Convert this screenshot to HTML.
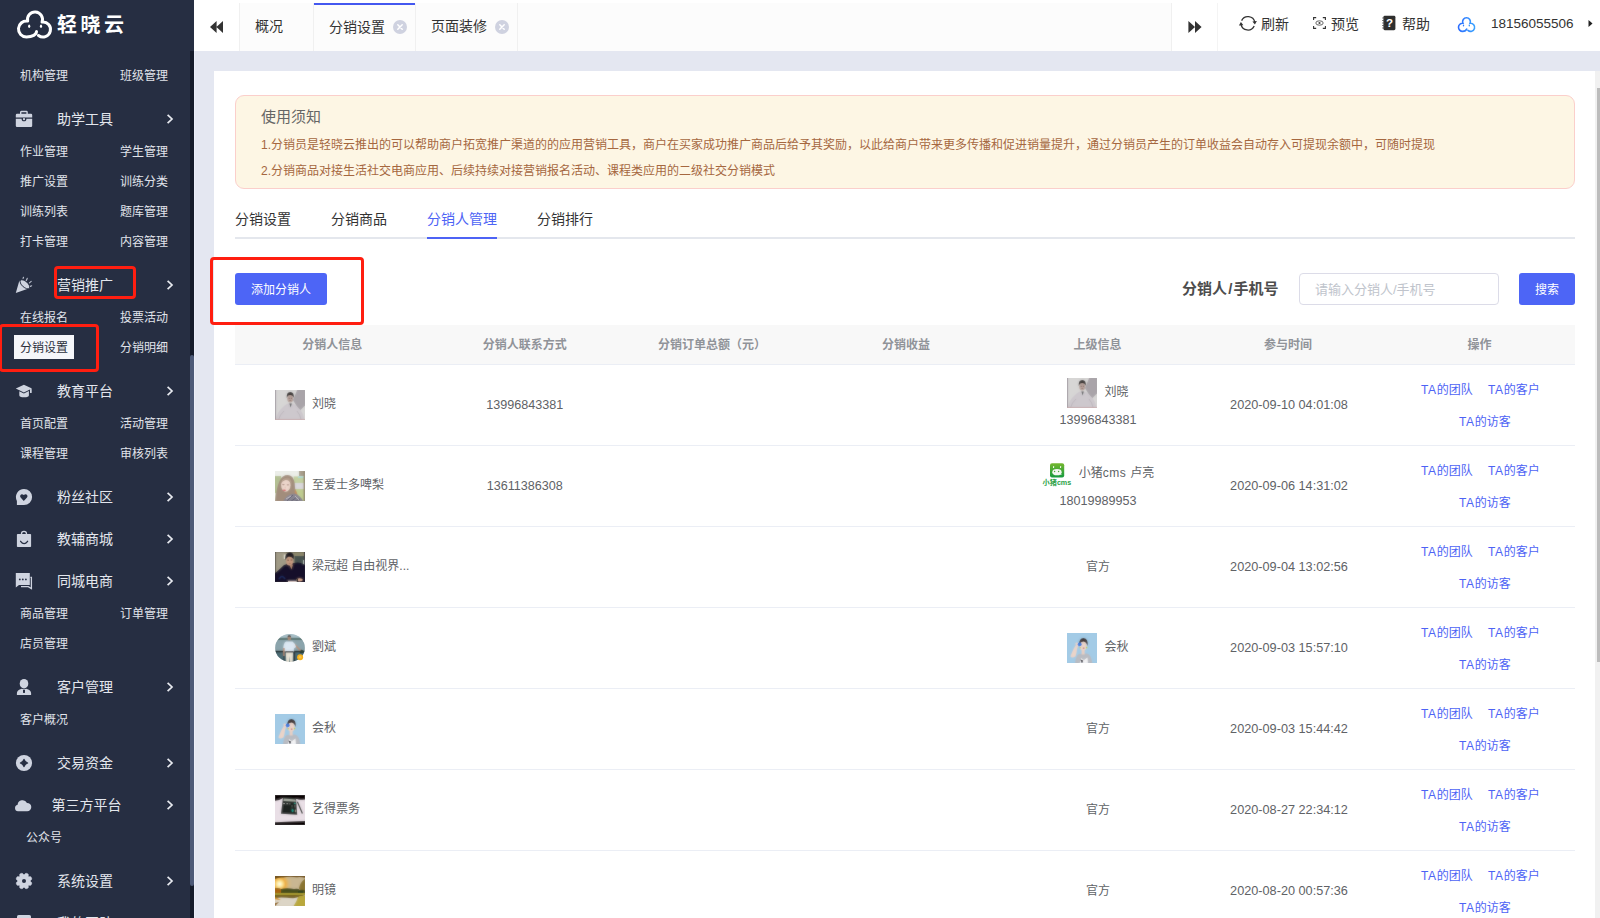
<!DOCTYPE html>
<html lang="zh-CN">
<head>
<meta charset="utf-8">
<title>分销设置 - 轻晓云</title>
<style>
*{box-sizing:border-box;margin:0;padding:0}
html,body{width:1600px;height:918px;overflow:hidden}
body{font-family:"Liberation Sans","Noto Sans CJK SC",sans-serif;background:#e4e7f1;position:relative;color:#555;font-size:12px}
.abs{position:absolute}
/* sidebar */
#side{position:absolute;left:0;top:0;width:194px;height:918px;background:#262e42;overflow:hidden}
#side .track{position:absolute;left:190px;top:51px;width:4px;height:867px;background:#161c2b}
#side .thumb{position:absolute;left:190px;top:355px;width:4px;height:531px;background:#4d5a78;border-radius:2px}
#side .sub{position:absolute;width:100px;text-align:center;font-size:12px;line-height:20px;height:20px;color:#e1e4eb;white-space:nowrap}
#side .sub.l{left:-6px}
#side .sub.r{left:94px}
#side .hd{position:absolute;left:0;width:170px;text-align:center;font-size:14px;line-height:22px;height:22px;color:#e3e6ed;white-space:nowrap}
#side .ar{position:absolute;left:166px;width:8px;height:10px}
#side .ic{position:absolute;left:15px;width:18px;height:18px}
/* topbar */
#top{position:absolute;left:194px;top:0;width:1406px;height:51px;background:#fff}
#top .strip{position:absolute;left:45px;top:3px;width:933px;height:48px;background:#fcfcfc;border-left:1px solid #f0f0f0;border-right:1px solid #f0f0f0}
#top .tab{position:absolute;top:3px;height:48px;line-height:46px;font-size:14px;color:#333;border-right:1px solid #f0f0f0;white-space:nowrap}
#top .tab.on{border-top:2px solid transparent;line-height:44px;background:#fcfcfc}
#top .tab.on:before{content:"";position:absolute;left:0;top:-2px;width:101px;height:2px;background:#4458f0}
#top .x{position:absolute;width:13px;height:13px;border-radius:50%;background:#d5d5de}
#top .t{position:absolute;top:14px;font-size:14px;line-height:20px;color:#333;white-space:nowrap}
/* card */
#card{position:absolute;left:214px;top:71px;width:1381px;height:847px;background:#fff}
#vs{position:absolute;left:1595px;top:71px;width:5px;height:847px;background:#f1f1f1}
#vs i{position:absolute;left:2px;top:17px;width:3px;height:574px;background:#bcbcbc}
#note{position:absolute;left:235px;top:95px;width:1340px;height:94px;background:#fdf6e4;border:1px solid #fbcfcb;border-radius:9px}
#note h4{position:absolute;left:25px;top:10px;font-size:15px;font-weight:normal;color:#666;line-height:22px}
#note p{position:absolute;left:25px;font-size:12px;color:#a5673f;line-height:18px;white-space:nowrap}
.ntab{position:absolute;top:208px;font-size:14px;line-height:22px;color:#333;white-space:nowrap}
.ntab.on{color:#4d63f5}
#nline{position:absolute;left:235px;top:237px;width:1340px;height:2px;background:#e4e7ed}
#nact{position:absolute;left:427px;top:237px;width:70px;height:2px;background:#4d63f5}
.btn{position:absolute;top:273px;height:32px;line-height:34px;background:#4d65f6;color:#fff;font-size:12px;text-align:center;border-radius:3px}
#slabel{position:absolute;left:1182px;top:278px;font-size:15px;font-weight:bold;color:#4d4d4d;line-height:22px;white-space:nowrap}
#sinput{position:absolute;left:1299px;top:273px;width:200px;height:32px;border:1px solid #dcdce8;border-radius:4px;font-size:13px;line-height:31px;color:#c0c4cc;padding-left:15px;white-space:nowrap}
.red{position:absolute;border:3px solid #ff1e10;border-radius:4px}
/* table */
#th{position:absolute;left:235px;top:325px;width:1340px;height:40px;background:#f8f8f8;border-bottom:1px solid #ebeef5}
#th span{position:absolute;top:0;width:200px;text-align:center;line-height:40px;font-size:12px;font-weight:bold;color:#909399;white-space:nowrap}
.row{position:absolute;left:235px;width:1340px;height:81px;border-bottom:1px solid #ebeef5}
.row .av{position:absolute;left:40px;top:25px;width:30px;height:30px;overflow:hidden}
.row .nm{position:absolute;left:77px;top:30px;line-height:18px;font-size:12px;color:#606266;white-space:nowrap}
.row .ph{position:absolute;left:189.7px;width:200px;top:31px;line-height:18px;text-align:center;font-size:12.6px;color:#606266}
.row .tm{position:absolute;left:954px;width:200px;top:31px;line-height:18px;text-align:center;font-size:12.7px;color:#606266;white-space:nowrap}
.row .up{position:absolute;left:763px;width:200px;top:0;height:80px;text-align:center;font-size:12px;color:#606266}
.row .ul{position:absolute;left:0;width:100%;height:30px;display:flex;justify-content:center;align-items:center}
.row .uav{display:block;width:30px;height:30px;margin-right:7px}
.row .unm{line-height:18px;font-size:12px;white-space:nowrap;position:relative;top:-1px}
.row a{position:absolute;font-size:12px;line-height:18px;color:#4d63f5;white-space:nowrap;text-decoration:none}
.row a span{letter-spacing:0.6px}
.row a.a1{left:1186px;top:16px}
.row a.a2{left:1253px;top:16px}
.row a.a3{left:1224px;top:48px}
</style>
</head>
<body>
<div id="side">
<svg class="abs" style="left:0;top:0.7px" width="60" height="50" viewBox="0 0 60 50"><path d="M36.5 30.5 C36.5 33.5 32.5 36 26.5 36 A8 8 0 1 1 27.67 20.09 A7.5 7.5 0 1 1 42.05 21.06 A7.5 7.5 0 1 1 38.49 34.49" fill="none" stroke="#fff" stroke-width="3" stroke-linecap="round" stroke-linejoin="round"/><ellipse cx="29.2" cy="25.2" rx="1.1" ry="1.8" fill="#fff"/><ellipse cx="41" cy="25.2" rx="1.1" ry="1.8" fill="#fff"/></svg>
<div class="abs" style="left:57.1px;top:9.8px;font-size:20px;line-height:30px;font-weight:bold;color:#fff;letter-spacing:3.4px;white-space:nowrap">轻晓云</div>

<div class="sub l" style="top:66px">机构管理</div><div class="sub r" style="top:66px">班级管理</div>
<div class="ic" style="top:110px"><svg width="18" height="18" viewBox="0 0 18 18" style="display:block;overflow:visible"><path d="M5.7 4 V2.2 Q5.7 1.5 6.4 1.5 H11.4 Q12.1 1.5 12.1 2.2 V4" fill="none" stroke="#cfd4e0" stroke-width="1.4"/><path d="M0.8 4.9 Q0.8 3.7 2 3.7 H16 Q17.2 3.7 17.2 4.9 V7.6 H0.8 Z" fill="#cfd4e0"/><path d="M0.8 8.7 H6.6 A2.4 2.6 0 0 0 11.4 8.7 H17.2 V15.8 Q17.2 17 16 17 H2 Q0.8 17 0.8 15.8 Z" fill="#cfd4e0"/><circle cx="9" cy="9.2" r="1.1" fill="#cfd4e0"/></svg></div><div class="hd" style="top:108px;">助学工具</div><svg class="ar" style="top:114px" viewBox="0 0 8 10"><path d="M1.6 0.8 L6 5 L1.6 9.2" fill="none" stroke="#e8eaf0" stroke-width="1.7"/></svg>
<div class="sub l" style="top:142px">作业管理</div><div class="sub r" style="top:142px">学生管理</div>
<div class="sub l" style="top:172px">推广设置</div><div class="sub r" style="top:172px">训练分类</div>
<div class="sub l" style="top:202px">训练列表</div><div class="sub r" style="top:202px">题库管理</div>
<div class="sub l" style="top:232px">打卡管理</div><div class="sub r" style="top:232px">内容管理</div>
<div class="ic" style="top:276px"><svg width="18" height="18" viewBox="0 0 18 18" style="display:block;overflow:visible"><path d="M0.8 17.1 L4.4 4.6 Q5.2 8.4 7.8 10.6 Q10.4 12.8 13.6 12.6 Z" fill="#cfd4e0"/><ellipse cx="9.9" cy="8.3" rx="5.9" ry="2.9" transform="rotate(42 9.9 8.3)" fill="#cfd4e0" stroke="#262e42" stroke-width="0.8"/><path d="M8.1 2.4 L8.5 1.3 M11.3 4.4 L12.2 2.4 M14.4 6.9 L16.2 5.4 M15.4 10.4 L16.6 9.8" stroke="#cfd4e0" stroke-width="1.2" stroke-linecap="round" fill="none" opacity="0.85"/></svg></div><div class="hd" style="top:274px;">营销推广</div><svg class="ar" style="top:280px" viewBox="0 0 8 10"><path d="M1.6 0.8 L6 5 L1.6 9.2" fill="none" stroke="#e8eaf0" stroke-width="1.7"/></svg>
<div class="sub l" style="top:308px">在线报名</div><div class="sub r" style="top:308px">投票活动</div>
<div style="position:absolute;left:14px;top:335px;width:60px;height:24px;background:#f5f6fa"></div>
<div class="sub l" style="top:338px"><span style="color:#2b2f3a">分销设置</span></div><div class="sub r" style="top:338px">分销明细</div>
<div class="ic" style="top:382px"><svg width="18" height="18" viewBox="0 0 18 18" style="display:block;overflow:visible"><path d="M0.8 6.6 L8.9 2.8 L17 6.6 L8.9 10.4 Z" fill="#cfd4e0"/><path d="M4.3 9.2 L8.9 11.4 L13.9 9.1 V13.2 Q13.9 15.2 9.1 15.2 Q4.3 15.2 4.3 13.2 Z" fill="#cfd4e0"/><rect x="15" y="7" width="1.7" height="4" rx="0.5" fill="#cfd4e0"/></svg></div><div class="hd" style="top:380px;">教育平台</div><svg class="ar" style="top:386px" viewBox="0 0 8 10"><path d="M1.6 0.8 L6 5 L1.6 9.2" fill="none" stroke="#e8eaf0" stroke-width="1.7"/></svg>
<div class="sub l" style="top:414px">首页配置</div><div class="sub r" style="top:414px">活动管理</div>
<div class="sub l" style="top:444px">课程管理</div><div class="sub r" style="top:444px">审核列表</div>
<div class="ic" style="top:488px"><svg width="18" height="18" viewBox="0 0 18 18" style="display:block;overflow:visible"><path d="M9 0.9 A8.1 8.1 0 1 1 9 17.1 H1.9 V12.9 A8.1 8.1 0 0 1 9 0.9 Z" fill="#cfd4e0"/><path d="M8.8 12.9 L5.6 9.5 Q4.6 8.2 5.5 7 Q6.8 5.7 8.8 7.1 Q10.8 5.7 12.1 7 Q13 8.2 12 9.5 Z" fill="#262e42"/></svg></div><div class="hd" style="top:486px;">粉丝社区</div><svg class="ar" style="top:492px" viewBox="0 0 8 10"><path d="M1.6 0.8 L6 5 L1.6 9.2" fill="none" stroke="#e8eaf0" stroke-width="1.7"/></svg>
<div class="ic" style="top:530px"><svg width="18" height="18" viewBox="0 0 18 18" style="display:block;overflow:visible"><path d="M6.5 4.6 V3.8 A2.5 2.5 0 0 1 11.5 3.8 V4.6" fill="none" stroke="#cfd4e0" stroke-width="1.3"/><rect x="1.9" y="3.9" width="14.2" height="13.1" rx="0.8" fill="#cfd4e0"/><path d="M5.6 11.3 Q9 16 12.6 11.3" fill="none" stroke="#262e42" stroke-width="1.3" stroke-linecap="round"/></svg></div><div class="hd" style="top:528px;">教辅商城</div><svg class="ar" style="top:534px" viewBox="0 0 8 10"><path d="M1.6 0.8 L6 5 L1.6 9.2" fill="none" stroke="#e8eaf0" stroke-width="1.7"/></svg>
<div class="ic" style="top:572px"><svg width="18" height="18" viewBox="0 0 18 18" style="display:block;overflow:visible"><path d="M0.8 0.9 H14.8 V13.1 H4 L0.8 15.4 Z" fill="#cfd4e0"/><circle cx="4.8" cy="7.4" r="0.9" fill="#262e42"/><circle cx="7.8" cy="7.4" r="0.9" fill="#262e42"/><circle cx="10.9" cy="7.4" r="0.9" fill="#262e42"/><path d="M15.4 5.4 H16.4 V16.6 L13.3 14.7 H6" fill="none" stroke="#cfd4e0" stroke-width="1.3"/></svg></div><div class="hd" style="top:570px;">同城电商</div><svg class="ar" style="top:576px" viewBox="0 0 8 10"><path d="M1.6 0.8 L6 5 L1.6 9.2" fill="none" stroke="#e8eaf0" stroke-width="1.7"/></svg>
<div class="sub l" style="top:604px">商品管理</div><div class="sub r" style="top:604px">订单管理</div>
<div class="sub l" style="top:634px">店员管理</div>
<div class="ic" style="top:678px"><svg width="18" height="18" viewBox="0 0 18 18" style="display:block;overflow:visible"><ellipse cx="9" cy="5.7" rx="4.3" ry="4.8" fill="#cfd4e0"/><path d="M1.9 17 V15 Q1.9 12.3 6.8 10.8 L9 11.6 L11.2 10.8 Q16.1 12.3 16.1 15 V17 Z" fill="#cfd4e0"/><rect x="8" y="12" width="2" height="2.9" fill="#262e42"/></svg></div><div class="hd" style="top:676px;">客户管理</div><svg class="ar" style="top:682px" viewBox="0 0 8 10"><path d="M1.6 0.8 L6 5 L1.6 9.2" fill="none" stroke="#e8eaf0" stroke-width="1.7"/></svg>
<div class="sub l" style="top:710px">客户概况</div>
<div class="ic" style="top:754px"><svg width="18" height="18" viewBox="0 0 18 18" style="display:block;overflow:visible"><circle cx="9" cy="9" r="8.1" fill="#cfd4e0"/><path d="M9 5.4 Q9.9 8.1 12.6 9 Q9.9 9.9 9 12.6 Q8.1 9.9 5.4 9 Q8.1 8.1 9 5.4 Z" fill="#262e42" stroke="#262e42" stroke-width="1.2" stroke-linejoin="round"/></svg></div><div class="hd" style="top:752px;">交易资金</div><svg class="ar" style="top:758px" viewBox="0 0 8 10"><path d="M1.6 0.8 L6 5 L1.6 9.2" fill="none" stroke="#e8eaf0" stroke-width="1.7"/></svg>
<div class="ic" style="top:796px"><svg width="18" height="18" viewBox="0 0 18 18" style="display:block;overflow:visible"><path d="M3 15.3 A3.3 3.3 0 0 1 2.6 8.8 A5 5 0 0 1 12 6.9 A4.2 4.2 0 0 1 12.2 15.3 Z" fill="#cfd4e0"/></svg></div><div class="hd" style="top:794px;left:1.5px">第三方平台</div><svg class="ar" style="top:800px" viewBox="0 0 8 10"><path d="M1.6 0.8 L6 5 L1.6 9.2" fill="none" stroke="#e8eaf0" stroke-width="1.7"/></svg>
<div class="sub l" style="top:828px">公众号</div>
<div class="ic" style="top:872px"><svg width="18" height="18" viewBox="0 0 18 18" style="display:block;overflow:visible"><path d="M15.49 9.40 L16.86 10.96 L15.94 13.17 L13.87 13.31 L13.31 13.87 L13.17 15.94 L10.96 16.86 L9.40 15.49 L8.60 15.49 L7.04 16.86 L4.83 15.94 L4.69 13.87 L4.13 13.31 L2.06 13.17 L1.14 10.96 L2.51 9.40 L2.51 8.60 L1.14 7.04 L2.06 4.83 L4.13 4.69 L4.69 4.13 L4.83 2.06 L7.04 1.14 L8.60 2.51 L9.40 2.51 L10.96 1.14 L13.17 2.06 L13.31 4.13 L13.87 4.69 L15.94 4.83 L16.86 7.04 L15.49 8.60 Z" fill="#cfd4e0" stroke="#cfd4e0" stroke-width="0.6" stroke-linejoin="round"/><circle cx="9" cy="9" r="2" fill="#262e42"/></svg></div><div class="hd" style="top:870px;">系统设置</div><svg class="ar" style="top:876px" viewBox="0 0 8 10"><path d="M1.6 0.8 L6 5 L1.6 9.2" fill="none" stroke="#e8eaf0" stroke-width="1.7"/></svg>
<div class="ic" style="top:914px"><svg width="18" height="18" viewBox="0 0 18 18" style="display:block;overflow:visible"><rect x="2" y="1" width="14" height="12" rx="1.6" fill="#cfd4e0"/></svg></div><div class="hd" style="top:912px;">我的团队</div><svg class="ar" style="top:918px" viewBox="0 0 8 10"><path d="M1.6 0.8 L6 5 L1.6 9.2" fill="none" stroke="#e8eaf0" stroke-width="1.7"/></svg>
<div class="track"></div><div class="thumb"></div>
</div>
<div id="top">
<div class="strip"></div>
<svg class="abs" style="left:16px;top:21px" width="14" height="12" viewBox="0 0 14 12"><path d="M6.6 0 V12 L0 6 Z M13 0 V12 L6.4 6 Z" fill="#333"/></svg>
<div class="tab" style="left:45px;width:75px;padding-left:15px;border-left:1px solid #f0f0f0">概况</div>
<div class="tab on" style="left:120px;width:102px;padding-left:15px">分销设置</div>
<svg class="abs" style="left:199px;top:20px" width="14" height="14" viewBox="0 0 14 14"><circle cx="7" cy="7" r="7" fill="#cfd2e0"/><path d="M4.8 4.8 L9.2 9.2 M9.2 4.8 L4.8 9.2" stroke="#fff" stroke-width="1.5" stroke-linecap="round"/></svg>
<div class="tab" style="left:222px;width:102px;padding-left:15px">页面装修</div>
<svg class="abs" style="left:301px;top:20px" width="14" height="14" viewBox="0 0 14 14"><circle cx="7" cy="7" r="7" fill="#cfd2e0"/><path d="M4.8 4.8 L9.2 9.2 M9.2 4.8 L4.8 9.2" stroke="#fff" stroke-width="1.5" stroke-linecap="round"/></svg>
<div class="abs" style="left:1023px;top:3px;width:1px;height:48px;background:#f4f4f4"></div>
<svg class="abs" style="left:994px;top:21px" width="14" height="12" viewBox="0 0 14 12"><path d="M0.4 0 V12 L7 6 Z M7 0 V12 L13.6 6 Z" fill="#333"/></svg>
<!-- refresh -->
<svg class="abs" style="left:1044px;top:14px" width="20" height="18" viewBox="0 0 20 18"><path d="M3.6 6.6 A7 7 0 0 1 16.8 8.2 M16.2 12 A7 7 0 0 1 3 10.4" fill="none" stroke="#333" stroke-width="1.3"/><path d="M14.4 7.4 L16.9 10.6 L18.9 7 Z" fill="#333"/><path d="M5.4 11.2 L2.9 8 L0.9 11.6 Z" fill="#333"/></svg>
<div class="t" style="left:1067px">刷新</div>
<!-- preview -->
<svg class="abs" style="left:1119px;top:17px" width="13" height="12" viewBox="0 0 13 12"><path d="M0.6 3 V0.6 H3.2 M9.8 0.6 H12.4 V3 M12.4 9 V11.4 H9.8 M3.2 11.4 H0.6 V9" fill="none" stroke="#333" stroke-width="1.1"/><ellipse cx="6.5" cy="6" rx="3.7" ry="2.2" fill="none" stroke="#555" stroke-width="0.9"/><circle cx="6.5" cy="6" r="1.1" fill="#444"/></svg>
<div class="t" style="left:1137px">预览</div>
<!-- help -->
<svg class="abs" style="left:1188px;top:15px" width="14" height="16" viewBox="0 0 14 16"><rect x="1.4" y="0.8" width="12" height="14.4" rx="1.4" fill="#2e2e2e"/><path d="M0.2 3 H2.4 M0.2 5.5 H2.4 M0.2 8 H2.4 M0.2 10.5 H2.4 M0.2 13 H2.4" stroke="#555" stroke-width="0.9"/><text x="7.6" y="12.2" font-family="Liberation Sans,sans-serif" font-size="11.5" font-weight="bold" fill="#fff" text-anchor="middle">?</text></svg>
<div class="t" style="left:1208px">帮助</div>
<!-- cloud -->
<svg class="abs" style="left:1262px;top:15px" width="22" height="20" viewBox="0 0 22 20"><defs><linearGradient id="cg" x1="0" y1="0" x2="1" y2="0"><stop offset="0" stop-color="#2b6dff"/><stop offset="1" stop-color="#3aa2ff"/></linearGradient></defs><path d="M10.7 14.1 C10.2 15.6 8.6 16.4 6.6 16.4 A4.1 4.1 0 1 1 6.904 8.211 A3.9 3.9 0 1 1 14.089 8.226 A4.1 4.1 0 1 1 11.915 15.44" fill="none" stroke="url(#cg)" stroke-width="1.6" stroke-linecap="round"/><ellipse cx="7.5" cy="10.4" rx="0.7" ry="1" fill="#2f7cff"/><ellipse cx="13.3" cy="10.4" rx="0.7" ry="1" fill="#3793ff"/></svg>
<div class="t" style="left:1297px;font-size:13.5px">18156055506</div>
<svg class="abs" style="left:1394px;top:20px" width="5" height="7" viewBox="0 0 5 7"><path d="M0.5 0 L4.5 3.5 L0.5 7 Z" fill="#222"/></svg>

</div>
<div class="abs" style="left:194px;top:51px;width:1px;height:867px;background:#ebeef8"></div>
<div id="card"></div>
<div id="vs"><i></i></div>
<div id="note">
<h4>使用须知</h4>
<p style="top:40px">1.分销员是轻晓云推出的可以帮助商户拓宽推广渠道的的应用营销工具，商户在买家成功推广商品后给予其奖励，以此给商户带来更多传播和促进销量提升，通过分销员产生的订单收益会自动存入可提现余额中，可随时提现</p>
<p style="top:66px">2.分销商品对接生活社交电商应用、后续持续对接营销报名活动、课程类应用的二级社交分销模式</p>
</div>
<div class="ntab" style="left:235px">分销设置</div>
<div class="ntab" style="left:331px">分销商品</div>
<div class="ntab on" style="left:427px">分销人管理</div>
<div class="ntab" style="left:537px">分销排行</div>
<div id="nline"></div><div id="nact"></div>
<div class="btn" style="left:235px;width:92px">添加分销人</div>
<div id="slabel">分销人<span style="padding:0 1.2px">/</span>手机号</div>
<div id="sinput">请输入分销人/手机号</div>
<div class="btn" style="left:1519px;width:56px">搜索</div>
<div id="th">
<span style="left:-2.8px">分销人信息</span><span style="left:189.7px">分销人联系方式</span><span style="left:377.1px">分销订单总额（元）</span><span style="left:571.0px">分销收益</span><span style="left:762.5px">上级信息</span><span style="left:953.0px">参与时间</span><span style="left:1144.4px">操作</span>
</div>
<div class="row" style="top:365px"><div class="av"><svg width="30" height="30" viewBox="0 0 30 30" style="display:block"><defs><filter id="bl1" x="-10%" y="-10%" width="120%" height="120%"><feGaussianBlur stdDeviation="0.8"/></filter><clipPath id="cp1"><rect width="30" height="30"/></clipPath></defs><g clip-path="url(#cp1)"><g filter="url(#bl1)"><rect x="-2" y="-2" width="34" height="34" fill="#d7d6d5"/><path d="M22.6 -1 H31 V14.5 L24.5 21 L18 10 Z" fill="#a9a4a9"/><rect x="-2" y="-2" width="3" height="34" fill="#a59fa6"/><path d="M0.5 31 Q2 22 7 18 Q11 13.5 15 13 Q20 13.5 23.5 18 Q28.5 22 29.5 31 Z" fill="#cdc8cd"/><path d="M3 31 Q5 24 9 21" stroke="#bdb7be" stroke-width="1" fill="none"/><path d="M26.5 31 Q25 24 22 21" stroke="#bdb7be" stroke-width="1" fill="none"/><ellipse cx="15.2" cy="8.6" rx="3" ry="4" fill="#b7a29b"/><path d="M11.8 8 Q11.2 2.2 15.3 2 Q19.4 2.2 18.7 8 Q17.8 4.8 15.2 4.9 Q12.6 4.8 11.8 8 Z" fill="#2f2b2a"/><path d="M13.6 8.3 H14.8 M15.8 8.3 H17" stroke="#6a544e" stroke-width="0.7"/><rect x="14.3" y="10.3" width="2" height="0.7" fill="#8a6d66"/><path d="M14.4 13.5 L15.6 17.5 L16.8 13.5 Z" fill="#5d5f60"/><rect x="-2" y="29.3" width="34" height="2" fill="#c9a9aa"/></g><g opacity="0.5"><rect x="-2" y="-2" width="34" height="34" fill="#d7d6d5"/><path d="M22.6 -1 H31 V14.5 L24.5 21 L18 10 Z" fill="#a9a4a9"/><rect x="-2" y="-2" width="3" height="34" fill="#a59fa6"/><path d="M0.5 31 Q2 22 7 18 Q11 13.5 15 13 Q20 13.5 23.5 18 Q28.5 22 29.5 31 Z" fill="#cdc8cd"/><path d="M3 31 Q5 24 9 21" stroke="#bdb7be" stroke-width="1" fill="none"/><path d="M26.5 31 Q25 24 22 21" stroke="#bdb7be" stroke-width="1" fill="none"/><ellipse cx="15.2" cy="8.6" rx="3" ry="4" fill="#b7a29b"/><path d="M11.8 8 Q11.2 2.2 15.3 2 Q19.4 2.2 18.7 8 Q17.8 4.8 15.2 4.9 Q12.6 4.8 11.8 8 Z" fill="#2f2b2a"/><path d="M13.6 8.3 H14.8 M15.8 8.3 H17" stroke="#6a544e" stroke-width="0.7"/><rect x="14.3" y="10.3" width="2" height="0.7" fill="#8a6d66"/><path d="M14.4 13.5 L15.6 17.5 L16.8 13.5 Z" fill="#5d5f60"/><rect x="-2" y="29.3" width="34" height="2" fill="#c9a9aa"/></g></g></svg></div><div class="nm">刘晓</div><div class="ph">13996843381</div><div class="up"><div class="ul" style="top:13px"><span class="uav"><svg width="30" height="30" viewBox="0 0 30 30" style="display:block"><defs><filter id="bl2" x="-10%" y="-10%" width="120%" height="120%"><feGaussianBlur stdDeviation="0.8"/></filter><clipPath id="cp2"><rect width="30" height="30"/></clipPath></defs><g clip-path="url(#cp2)"><g filter="url(#bl2)"><rect x="-2" y="-2" width="34" height="34" fill="#d7d6d5"/><path d="M22.6 -1 H31 V14.5 L24.5 21 L18 10 Z" fill="#a9a4a9"/><rect x="-2" y="-2" width="3" height="34" fill="#a59fa6"/><path d="M0.5 31 Q2 22 7 18 Q11 13.5 15 13 Q20 13.5 23.5 18 Q28.5 22 29.5 31 Z" fill="#cdc8cd"/><path d="M3 31 Q5 24 9 21" stroke="#bdb7be" stroke-width="1" fill="none"/><path d="M26.5 31 Q25 24 22 21" stroke="#bdb7be" stroke-width="1" fill="none"/><ellipse cx="15.2" cy="8.6" rx="3" ry="4" fill="#b7a29b"/><path d="M11.8 8 Q11.2 2.2 15.3 2 Q19.4 2.2 18.7 8 Q17.8 4.8 15.2 4.9 Q12.6 4.8 11.8 8 Z" fill="#2f2b2a"/><path d="M13.6 8.3 H14.8 M15.8 8.3 H17" stroke="#6a544e" stroke-width="0.7"/><rect x="14.3" y="10.3" width="2" height="0.7" fill="#8a6d66"/><path d="M14.4 13.5 L15.6 17.5 L16.8 13.5 Z" fill="#5d5f60"/><rect x="-2" y="29.3" width="34" height="2" fill="#c9a9aa"/></g><g opacity="0.5"><rect x="-2" y="-2" width="34" height="34" fill="#d7d6d5"/><path d="M22.6 -1 H31 V14.5 L24.5 21 L18 10 Z" fill="#a9a4a9"/><rect x="-2" y="-2" width="3" height="34" fill="#a59fa6"/><path d="M0.5 31 Q2 22 7 18 Q11 13.5 15 13 Q20 13.5 23.5 18 Q28.5 22 29.5 31 Z" fill="#cdc8cd"/><path d="M3 31 Q5 24 9 21" stroke="#bdb7be" stroke-width="1" fill="none"/><path d="M26.5 31 Q25 24 22 21" stroke="#bdb7be" stroke-width="1" fill="none"/><ellipse cx="15.2" cy="8.6" rx="3" ry="4" fill="#b7a29b"/><path d="M11.8 8 Q11.2 2.2 15.3 2 Q19.4 2.2 18.7 8 Q17.8 4.8 15.2 4.9 Q12.6 4.8 11.8 8 Z" fill="#2f2b2a"/><path d="M13.6 8.3 H14.8 M15.8 8.3 H17" stroke="#6a544e" stroke-width="0.7"/><rect x="14.3" y="10.3" width="2" height="0.7" fill="#8a6d66"/><path d="M14.4 13.5 L15.6 17.5 L16.8 13.5 Z" fill="#5d5f60"/><rect x="-2" y="29.3" width="34" height="2" fill="#c9a9aa"/></g></g></svg></span><span class="unm">刘晓</span></div><div style="position:absolute;left:0;width:100%;top:46px;line-height:18px;font-size:12.6px">13996843381</div></div><div class="tm">2020-09-10 04:01:08</div><a class="a1"><span>TA</span>的团队</a><a class="a2"><span>TA</span>的客户</a><a class="a3"><span>TA</span>的访客</a></div>
<div class="row" style="top:446px"><div class="av"><svg width="30" height="30" viewBox="0 0 30 30" style="display:block"><defs><filter id="bl3" x="-10%" y="-10%" width="120%" height="120%"><feGaussianBlur stdDeviation="1.0"/></filter><clipPath id="cp3"><rect width="30" height="30"/></clipPath></defs><g clip-path="url(#cp3)"><g filter="url(#bl3)"><rect x="-2" y="-2" width="34" height="34" fill="#d9dccb"/><rect x="-2" y="-2" width="34" height="7.5" fill="#eceee9"/><rect x="-2" y="5" width="8" height="17" fill="#b4c094"/><rect x="19" y="5.5" width="12" height="6.5" fill="#c3d0a0"/><rect x="19" y="12" width="12" height="6" fill="#d9d7da"/><rect x="19" y="18" width="12" height="13" fill="#bfcc91"/><rect x="24" y="-1" width="6" height="6" fill="#a99f8d"/><rect x="23" y="5.5" width="5.5" height="1.3" fill="#a5dce2"/><rect x="28.6" y="-1" width="2" height="33" fill="#91866f"/><path d="M0 31 Q2 10 8 5.5 Q12 3 16 5 Q20 8 20 16 Q21 24 19 31 Z" fill="#a28d7c"/><path d="M20 18 Q24 24 22 28 L19 30 Z" fill="#c48d5e"/><ellipse cx="10.8" cy="14.2" rx="4.7" ry="6.6" fill="#ecd6cb"/><path d="M5.5 13 Q8 6 13 6.5 Q17 7.5 16.5 13 Q14 8.5 10.5 9 Q7.5 9.5 5.5 13Z" fill="#b09a88"/><ellipse cx="8.4" cy="13.6" rx="1.3" ry="0.6" fill="#a98b80"/><ellipse cx="12.9" cy="13.8" rx="1.3" ry="0.6" fill="#a98b80"/><ellipse cx="10.2" cy="16.6" rx="0.7" ry="1" fill="#e2c3b6"/><ellipse cx="9.3" cy="19.3" rx="1.7" ry="0.8" fill="#d7646a"/><path d="M8 31 Q11 23 20 22.5 Q26 25 28.5 31 Z" fill="#8a8691"/><path d="M12 30 L18 24 M15 31 L22 26 M19 31 L25 28" stroke="#5a5a70" stroke-width="1"/><path d="M11 28 L16 25 M20 25 L24 29" stroke="#d5d0d6" stroke-width="0.9"/></g><g opacity="0.5"><rect x="-2" y="-2" width="34" height="34" fill="#d9dccb"/><rect x="-2" y="-2" width="34" height="7.5" fill="#eceee9"/><rect x="-2" y="5" width="8" height="17" fill="#b4c094"/><rect x="19" y="5.5" width="12" height="6.5" fill="#c3d0a0"/><rect x="19" y="12" width="12" height="6" fill="#d9d7da"/><rect x="19" y="18" width="12" height="13" fill="#bfcc91"/><rect x="24" y="-1" width="6" height="6" fill="#a99f8d"/><rect x="23" y="5.5" width="5.5" height="1.3" fill="#a5dce2"/><rect x="28.6" y="-1" width="2" height="33" fill="#91866f"/><path d="M0 31 Q2 10 8 5.5 Q12 3 16 5 Q20 8 20 16 Q21 24 19 31 Z" fill="#a28d7c"/><path d="M20 18 Q24 24 22 28 L19 30 Z" fill="#c48d5e"/><ellipse cx="10.8" cy="14.2" rx="4.7" ry="6.6" fill="#ecd6cb"/><path d="M5.5 13 Q8 6 13 6.5 Q17 7.5 16.5 13 Q14 8.5 10.5 9 Q7.5 9.5 5.5 13Z" fill="#b09a88"/><ellipse cx="8.4" cy="13.6" rx="1.3" ry="0.6" fill="#a98b80"/><ellipse cx="12.9" cy="13.8" rx="1.3" ry="0.6" fill="#a98b80"/><ellipse cx="10.2" cy="16.6" rx="0.7" ry="1" fill="#e2c3b6"/><ellipse cx="9.3" cy="19.3" rx="1.7" ry="0.8" fill="#d7646a"/><path d="M8 31 Q11 23 20 22.5 Q26 25 28.5 31 Z" fill="#8a8691"/><path d="M12 30 L18 24 M15 31 L22 26 M19 31 L25 28" stroke="#5a5a70" stroke-width="1"/><path d="M11 28 L16 25 M20 25 L24 29" stroke="#d5d0d6" stroke-width="0.9"/></g></g></svg></div><div class="nm">至爱士多啤梨</div><div class="ph">13611386308</div><div class="up"><div class="ul" style="top:13px"><span class="uav"><svg width="30" height="30" viewBox="0 0 30 30" style="display:block"><defs><linearGradient id="gg" x1="0" y1="0" x2="0" y2="1"><stop offset="0" stop-color="#74b72e"/><stop offset="1" stop-color="#159a3f"/></linearGradient></defs><rect x="8" y="4.3" width="14.2" height="14.3" rx="2" fill="url(#gg)"/><rect x="11" y="7" width="1.1" height="2.1" rx="0.5" fill="#f4f8ee"/><rect x="18" y="7" width="1.1" height="2.1" rx="0.5" fill="#f4f8ee"/><ellipse cx="15" cy="13.2" rx="4.7" ry="3.1" fill="#f4f6f2"/><path d="M18 15 L20.3 15.8 L18.5 16 Z" fill="#f4f6f2"/><circle cx="12.6" cy="12.5" r="0.7" fill="#4aa83a"/><circle cx="16.6" cy="12.5" r="0.7" fill="#4aa83a"/><text x="0.6" y="26.1" font-family="Liberation Sans,Noto Sans CJK SC,sans-serif" font-size="6.6" font-weight="bold" fill="#2aa146" textLength="28.6" lengthAdjust="spacingAndGlyphs">小猪cms</text></svg></span><span class="unm">小猪<span style="letter-spacing:0.5px">cms </span>卢亮</span></div><div style="position:absolute;left:0;width:100%;top:46px;line-height:18px;font-size:12.6px">18019989953</div></div><div class="tm">2020-09-06 14:31:02</div><a class="a1"><span>TA</span>的团队</a><a class="a2"><span>TA</span>的客户</a><a class="a3"><span>TA</span>的访客</a></div>
<div class="row" style="top:527px"><div class="av"><svg width="30" height="30" viewBox="0 0 30 30" style="display:block"><defs><filter id="bl4" x="-10%" y="-10%" width="120%" height="120%"><feGaussianBlur stdDeviation="0.8"/></filter><clipPath id="cp4"><rect width="30" height="30"/></clipPath></defs><g clip-path="url(#cp4)"><g filter="url(#bl4)"><rect x="-2" y="-2" width="34" height="34" fill="#8f8a76"/><rect x="-2" y="-2" width="13" height="22" fill="#a09a86"/><rect x="-2" y="-2" width="2.5" height="34" fill="#3a3838"/><rect x="19" y="-2" width="13" height="6" fill="#8c876c"/><rect x="19.5" y="4" width="9.5" height="11" fill="#46524f"/><rect x="28" y="8" width="1.6" height="7" fill="#b9c4bb"/><rect x="29.4" y="-2" width="2" height="34" fill="#1b1730"/><rect x="8.8" y="2.5" width="1.6" height="4.5" fill="#e8e6d6"/><path d="M-1 22 Q5 17 9 13 Q14 11 19 11 Q26 9 31 14 V31 H-1 Z" fill="#15112b"/><path d="M4 27 Q7 22 10 27" stroke="#1d2a5c" stroke-width="1.6" fill="none"/><ellipse cx="14.6" cy="9" rx="3.5" ry="4.6" fill="#c59a80"/><path d="M10.4 8 Q9.6 0.8 15 0.6 Q19.8 1 18.6 7 Q16.5 4.3 13.5 4.8 Q11.5 5.4 10.4 8 Z" fill="#17131d"/><path d="M12.3 8.2 H14 M15.6 8 H17.4" stroke="#5a3c30" stroke-width="0.8"/><ellipse cx="14.8" cy="11.3" rx="1.1" ry="0.5" fill="#a8705e"/><path d="M14.5 13 L16.5 17.5 L18 12.5 Z" fill="#b48a72"/><ellipse cx="24.5" cy="27.8" rx="3.2" ry="1.6" fill="#d9a98f"/><rect x="13" y="28.8" width="9" height="2" fill="#e7d6d2"/><rect x="21.6" y="26.6" width="1.4" height="3" fill="#1a1a1a"/><rect x="-2" y="-2" width="34" height="1.8" fill="#2b2832"/></g><g opacity="0.5"><rect x="-2" y="-2" width="34" height="34" fill="#8f8a76"/><rect x="-2" y="-2" width="13" height="22" fill="#a09a86"/><rect x="-2" y="-2" width="2.5" height="34" fill="#3a3838"/><rect x="19" y="-2" width="13" height="6" fill="#8c876c"/><rect x="19.5" y="4" width="9.5" height="11" fill="#46524f"/><rect x="28" y="8" width="1.6" height="7" fill="#b9c4bb"/><rect x="29.4" y="-2" width="2" height="34" fill="#1b1730"/><rect x="8.8" y="2.5" width="1.6" height="4.5" fill="#e8e6d6"/><path d="M-1 22 Q5 17 9 13 Q14 11 19 11 Q26 9 31 14 V31 H-1 Z" fill="#15112b"/><path d="M4 27 Q7 22 10 27" stroke="#1d2a5c" stroke-width="1.6" fill="none"/><ellipse cx="14.6" cy="9" rx="3.5" ry="4.6" fill="#c59a80"/><path d="M10.4 8 Q9.6 0.8 15 0.6 Q19.8 1 18.6 7 Q16.5 4.3 13.5 4.8 Q11.5 5.4 10.4 8 Z" fill="#17131d"/><path d="M12.3 8.2 H14 M15.6 8 H17.4" stroke="#5a3c30" stroke-width="0.8"/><ellipse cx="14.8" cy="11.3" rx="1.1" ry="0.5" fill="#a8705e"/><path d="M14.5 13 L16.5 17.5 L18 12.5 Z" fill="#b48a72"/><ellipse cx="24.5" cy="27.8" rx="3.2" ry="1.6" fill="#d9a98f"/><rect x="13" y="28.8" width="9" height="2" fill="#e7d6d2"/><rect x="21.6" y="26.6" width="1.4" height="3" fill="#1a1a1a"/><rect x="-2" y="-2" width="34" height="1.8" fill="#2b2832"/></g></g></svg></div><div class="nm">梁冠超 自由视界...</div><div class="up"><div style="position:absolute;left:0;width:100%;top:31px;line-height:18px">官方</div></div><div class="tm">2020-09-04 13:02:56</div><a class="a1"><span>TA</span>的团队</a><a class="a2"><span>TA</span>的客户</a><a class="a3"><span>TA</span>的访客</a></div>
<div class="row" style="top:608px"><div class="av"><svg width="30" height="30" viewBox="0 0 30 30" style="display:block"><defs><filter id="bl4"><feGaussianBlur stdDeviation="0.8"/></filter><clipPath id="cc4"><ellipse cx="15" cy="14.9" rx="14.8" ry="14"/></clipPath></defs><g clip-path="url(#cc4)"><g filter="url(#bl4)"><rect x="-2" y="-2" width="34" height="34" fill="#8ba4ac"/><rect x="-2" y="-2" width="34" height="7" fill="#a9c0c8"/><rect x="-2" y="4.8" width="34" height="2.2" fill="#587471"/><rect x="-2" y="18" width="34" height="13" fill="#4d6c74"/><rect x="-2" y="17.8" width="34" height="1.5" fill="#172224"/><rect x="18.6" y="18" width="1.5" height="12" fill="#1d2b30"/><rect x="8.5" y="18" width="1.2" height="12" fill="#2a3b40"/><ellipse cx="26.5" cy="18.5" rx="2.2" ry="1.8" fill="#1f3524"/><path d="M19 11 L25.5 17.5" stroke="#b98f76" stroke-width="1.6"/><path d="M8.3 17 Q8 10 11 8.5 L17.5 8.5 Q20.5 10.5 21 14 L19 15.5 L18.8 18.6 H9.8 Z" fill="#dce7f2"/><path d="M8.9 15 V23" stroke="#b58c74" stroke-width="1.5"/><rect x="10.6" y="18.4" width="7.4" height="1.2" fill="#2e2a28"/><path d="M10.8 19.6 H18 L17.6 31 H15 L14.4 23 L13.8 31 H11.4 Z" fill="#e7e2d4"/><ellipse cx="14.3" cy="5" rx="1.8" ry="2.5" fill="#a98671"/><path d="M12.5 4.2 Q12.6 2 14.3 2 Q16 2 16.1 4.2 Q14.3 3.2 12.5 4.2Z" fill="#4b4644"/></g><g opacity="0.5"><rect x="-2" y="-2" width="34" height="34" fill="#8ba4ac"/><rect x="-2" y="-2" width="34" height="7" fill="#a9c0c8"/><rect x="-2" y="4.8" width="34" height="2.2" fill="#587471"/><rect x="-2" y="18" width="34" height="13" fill="#4d6c74"/><rect x="-2" y="17.8" width="34" height="1.5" fill="#172224"/><rect x="18.6" y="18" width="1.5" height="12" fill="#1d2b30"/><rect x="8.5" y="18" width="1.2" height="12" fill="#2a3b40"/><ellipse cx="26.5" cy="18.5" rx="2.2" ry="1.8" fill="#1f3524"/><path d="M19 11 L25.5 17.5" stroke="#b98f76" stroke-width="1.6"/><path d="M8.3 17 Q8 10 11 8.5 L17.5 8.5 Q20.5 10.5 21 14 L19 15.5 L18.8 18.6 H9.8 Z" fill="#dce7f2"/><path d="M8.9 15 V23" stroke="#b58c74" stroke-width="1.5"/><rect x="10.6" y="18.4" width="7.4" height="1.2" fill="#2e2a28"/><path d="M10.8 19.6 H18 L17.6 31 H15 L14.4 23 L13.8 31 H11.4 Z" fill="#e7e2d4"/><ellipse cx="14.3" cy="5" rx="1.8" ry="2.5" fill="#a98671"/><path d="M12.5 4.2 Q12.6 2 14.3 2 Q16 2 16.1 4.2 Q14.3 3.2 12.5 4.2Z" fill="#4b4644"/></g></g><circle cx="25.1" cy="24.2" r="3" fill="#f6b21c"/><circle cx="25.1" cy="24.2" r="1.4" fill="#f9c44a"/></svg></div><div class="nm">劉斌</div><div class="up"><div class="ul" style="top:25px"><span class="uav"><svg width="30" height="30" viewBox="0 0 30 30" style="display:block"><defs><filter id="bl6" x="-10%" y="-10%" width="120%" height="120%"><feGaussianBlur stdDeviation="0.8"/></filter><clipPath id="cp6"><rect width="30" height="30"/></clipPath></defs><g clip-path="url(#cp6)"><g filter="url(#bl6)"><rect x="-2" y="-2" width="34" height="34" fill="#a3cbe6"/><path d="M8 31 Q8.5 22.5 12 21 L20 20.5 Q24.5 22 25.5 31 Z" fill="#b9bcc2"/><path d="M12.5 31 L14 25 L17 27 L20.5 24.5 L21 31 Z" fill="#f4f4f6"/><path d="M13.3 26.5 L15 30.5 L16.2 27.5 Z" fill="#2c2c34"/><path d="M14.6 16 H17.6 V21.5 H14.6 Z" fill="#e9cfc2"/><path d="M9.6 10.8 Q6 16 3.4 23.2 Q4.5 25.5 8.5 23.5 L9.5 20 Q10 15 11.4 12.6 Z" fill="#ecd4c8"/><ellipse cx="16.2" cy="12.9" rx="3.4" ry="4.5" fill="#ecd4c8"/><path d="M12.3 11.5 Q12 5.2 16.5 5 Q21.6 5.4 20.4 13 Q19.6 9 16.5 8.6 Q13.6 8.6 12.3 11.5 Z" fill="#392c2a"/><circle cx="9.8" cy="10.8" r="1.4" fill="#ecd4c8"/><circle cx="12.7" cy="11.3" r="1.9" fill="#2b72e0"/><ellipse cx="16.6" cy="15.1" rx="1" ry="0.7" fill="#b5686c"/><circle cx="19.6" cy="14.6" r="0.8" fill="#c8d23a"/><circle cx="13.2" cy="14.8" r="0.7" fill="#c8d23a"/></g><g opacity="0.5"><rect x="-2" y="-2" width="34" height="34" fill="#a3cbe6"/><path d="M8 31 Q8.5 22.5 12 21 L20 20.5 Q24.5 22 25.5 31 Z" fill="#b9bcc2"/><path d="M12.5 31 L14 25 L17 27 L20.5 24.5 L21 31 Z" fill="#f4f4f6"/><path d="M13.3 26.5 L15 30.5 L16.2 27.5 Z" fill="#2c2c34"/><path d="M14.6 16 H17.6 V21.5 H14.6 Z" fill="#e9cfc2"/><path d="M9.6 10.8 Q6 16 3.4 23.2 Q4.5 25.5 8.5 23.5 L9.5 20 Q10 15 11.4 12.6 Z" fill="#ecd4c8"/><ellipse cx="16.2" cy="12.9" rx="3.4" ry="4.5" fill="#ecd4c8"/><path d="M12.3 11.5 Q12 5.2 16.5 5 Q21.6 5.4 20.4 13 Q19.6 9 16.5 8.6 Q13.6 8.6 12.3 11.5 Z" fill="#392c2a"/><circle cx="9.8" cy="10.8" r="1.4" fill="#ecd4c8"/><circle cx="12.7" cy="11.3" r="1.9" fill="#2b72e0"/><ellipse cx="16.6" cy="15.1" rx="1" ry="0.7" fill="#b5686c"/><circle cx="19.6" cy="14.6" r="0.8" fill="#c8d23a"/><circle cx="13.2" cy="14.8" r="0.7" fill="#c8d23a"/></g></g></svg></span><span class="unm">会秋</span></div></div><div class="tm">2020-09-03 15:57:10</div><a class="a1"><span>TA</span>的团队</a><a class="a2"><span>TA</span>的客户</a><a class="a3"><span>TA</span>的访客</a></div>
<div class="row" style="top:689px"><div class="av"><svg width="30" height="30" viewBox="0 0 30 30" style="display:block"><defs><filter id="bl5" x="-10%" y="-10%" width="120%" height="120%"><feGaussianBlur stdDeviation="0.8"/></filter><clipPath id="cp5"><rect width="30" height="30"/></clipPath></defs><g clip-path="url(#cp5)"><g filter="url(#bl5)"><rect x="-2" y="-2" width="34" height="34" fill="#a3cbe6"/><path d="M8 31 Q8.5 22.5 12 21 L20 20.5 Q24.5 22 25.5 31 Z" fill="#b9bcc2"/><path d="M12.5 31 L14 25 L17 27 L20.5 24.5 L21 31 Z" fill="#f4f4f6"/><path d="M13.3 26.5 L15 30.5 L16.2 27.5 Z" fill="#2c2c34"/><path d="M14.6 16 H17.6 V21.5 H14.6 Z" fill="#e9cfc2"/><path d="M9.6 10.8 Q6 16 3.4 23.2 Q4.5 25.5 8.5 23.5 L9.5 20 Q10 15 11.4 12.6 Z" fill="#ecd4c8"/><ellipse cx="16.2" cy="12.9" rx="3.4" ry="4.5" fill="#ecd4c8"/><path d="M12.3 11.5 Q12 5.2 16.5 5 Q21.6 5.4 20.4 13 Q19.6 9 16.5 8.6 Q13.6 8.6 12.3 11.5 Z" fill="#392c2a"/><circle cx="9.8" cy="10.8" r="1.4" fill="#ecd4c8"/><circle cx="12.7" cy="11.3" r="1.9" fill="#2b72e0"/><ellipse cx="16.6" cy="15.1" rx="1" ry="0.7" fill="#b5686c"/><circle cx="19.6" cy="14.6" r="0.8" fill="#c8d23a"/><circle cx="13.2" cy="14.8" r="0.7" fill="#c8d23a"/></g><g opacity="0.5"><rect x="-2" y="-2" width="34" height="34" fill="#a3cbe6"/><path d="M8 31 Q8.5 22.5 12 21 L20 20.5 Q24.5 22 25.5 31 Z" fill="#b9bcc2"/><path d="M12.5 31 L14 25 L17 27 L20.5 24.5 L21 31 Z" fill="#f4f4f6"/><path d="M13.3 26.5 L15 30.5 L16.2 27.5 Z" fill="#2c2c34"/><path d="M14.6 16 H17.6 V21.5 H14.6 Z" fill="#e9cfc2"/><path d="M9.6 10.8 Q6 16 3.4 23.2 Q4.5 25.5 8.5 23.5 L9.5 20 Q10 15 11.4 12.6 Z" fill="#ecd4c8"/><ellipse cx="16.2" cy="12.9" rx="3.4" ry="4.5" fill="#ecd4c8"/><path d="M12.3 11.5 Q12 5.2 16.5 5 Q21.6 5.4 20.4 13 Q19.6 9 16.5 8.6 Q13.6 8.6 12.3 11.5 Z" fill="#392c2a"/><circle cx="9.8" cy="10.8" r="1.4" fill="#ecd4c8"/><circle cx="12.7" cy="11.3" r="1.9" fill="#2b72e0"/><ellipse cx="16.6" cy="15.1" rx="1" ry="0.7" fill="#b5686c"/><circle cx="19.6" cy="14.6" r="0.8" fill="#c8d23a"/><circle cx="13.2" cy="14.8" r="0.7" fill="#c8d23a"/></g></g></svg></div><div class="nm">会秋</div><div class="up"><div style="position:absolute;left:0;width:100%;top:31px;line-height:18px">官方</div></div><div class="tm">2020-09-03 15:44:42</div><a class="a1"><span>TA</span>的团队</a><a class="a2"><span>TA</span>的客户</a><a class="a3"><span>TA</span>的访客</a></div>
<div class="row" style="top:770px"><div class="av"><svg width="30" height="30" viewBox="0 0 30 30" style="display:block"><defs><filter id="bl7" x="-10%" y="-10%" width="120%" height="120%"><feGaussianBlur stdDeviation="0.8"/></filter><clipPath id="cp7"><rect width="30" height="30"/></clipPath></defs><g clip-path="url(#cp7)"><g filter="url(#bl7)"><rect x="-2" y="-2" width="34" height="34" fill="#e9dfe6"/><path d="M-1 -1 H31 V4.2 Q24 5.5 22 4 L8 3 Q4 5.8 -1 5.8 Z" fill="#0b0606"/><path d="M-1 27.3 L31 26 V31 H-1 Z" fill="#0b0606"/><path d="M8 2.2 L21 3.2 L22.2 19.8 L6 18.8 Z" fill="#1e2320"/><path d="M8.6 3.4 L20.6 4.4 L20.8 6.8 L8.4 5.9 Z" fill="#a9aea4"/><path d="M8.2 8.6 H10 M11.4 8.7 H13.2 M14.4 8.9 H15.4" stroke="#c9ccc6" stroke-width="0.9"/><path d="M17 10 V12.5 M19.8 10 V12.5 M17 13.5 V14.5" stroke="#5e6a62" stroke-width="1"/><rect x="18.8" y="7.6" width="2" height="1.6" fill="#1f8f7c"/><ellipse cx="17.6" cy="15.6" rx="1.1" ry="1.6" fill="#1f9d8a"/><rect x="19.8" y="14.6" width="1.5" height="2.6" fill="#8c8f7c"/><path d="M22.4 6.8 L27.4 18.6" stroke="#2a2d2a" stroke-width="1.2"/></g><g opacity="0.5"><rect x="-2" y="-2" width="34" height="34" fill="#e9dfe6"/><path d="M-1 -1 H31 V4.2 Q24 5.5 22 4 L8 3 Q4 5.8 -1 5.8 Z" fill="#0b0606"/><path d="M-1 27.3 L31 26 V31 H-1 Z" fill="#0b0606"/><path d="M8 2.2 L21 3.2 L22.2 19.8 L6 18.8 Z" fill="#1e2320"/><path d="M8.6 3.4 L20.6 4.4 L20.8 6.8 L8.4 5.9 Z" fill="#a9aea4"/><path d="M8.2 8.6 H10 M11.4 8.7 H13.2 M14.4 8.9 H15.4" stroke="#c9ccc6" stroke-width="0.9"/><path d="M17 10 V12.5 M19.8 10 V12.5 M17 13.5 V14.5" stroke="#5e6a62" stroke-width="1"/><rect x="18.8" y="7.6" width="2" height="1.6" fill="#1f8f7c"/><ellipse cx="17.6" cy="15.6" rx="1.1" ry="1.6" fill="#1f9d8a"/><rect x="19.8" y="14.6" width="1.5" height="2.6" fill="#8c8f7c"/><path d="M22.4 6.8 L27.4 18.6" stroke="#2a2d2a" stroke-width="1.2"/></g></g></svg></div><div class="nm">艺得票务</div><div class="up"><div style="position:absolute;left:0;width:100%;top:31px;line-height:18px">官方</div></div><div class="tm">2020-08-27 22:34:12</div><a class="a1"><span>TA</span>的团队</a><a class="a2"><span>TA</span>的客户</a><a class="a3"><span>TA</span>的访客</a></div>
<div class="row" style="top:851px"><div class="av"><svg width="30" height="30" viewBox="0 0 30 30" style="display:block"><defs><filter id="bl8" x="-10%" y="-10%" width="120%" height="120%"><feGaussianBlur stdDeviation="0.8"/></filter><clipPath id="cp8"><rect width="30" height="30"/></clipPath></defs><g clip-path="url(#cp8)"><g filter="url(#bl8)"><defs><radialGradient id="sun7" cx="4.6" cy="8" r="13" gradientUnits="userSpaceOnUse"><stop offset="0" stop-color="#fffef2"/><stop offset="0.2" stop-color="#fdeaa0"/><stop offset="0.45" stop-color="#eeb046"/><stop offset="0.75" stop-color="#d2b986"/><stop offset="1" stop-color="#c9b792"/></radialGradient></defs><rect x="-2" y="-2" width="34" height="34" fill="url(#sun7)"/><path d="M-1 -1 H31 V2 Q26 0.5 22 1.2 Q14 0 8 1.5 Q3 1 -1 3.5 Z" fill="#6a4a16"/><path d="M31 2 Q25 6 24 12 Q25 16 31 17 Z" fill="#8a7430"/><path d="M-1 12.5 Q3 12 6 13 Q12 11.5 19 13 Q23 12 25 14 Q28 13 31 15 V19 H-1 Z" fill="#454c1a"/><path d="M-1 12.5 Q3 12 6 13 L6 18 H-1 Z" fill="#a8640f"/><rect x="23" y="15" width="5" height="2.6" fill="#243c1c"/><rect x="-2" y="17" width="34" height="2" fill="#a79a30"/><rect x="-2" y="19" width="34" height="3.2" fill="#75601c"/><path d="M-1 22 Q8 21 18 22.5 L31 19 V31 H-1 Z" fill="#dcd5c6"/><path d="M-1 21 Q3 22 6 24 Q2 24 -1 23 Z" fill="#d89422"/><path d="M18 31 Q22 25 23 21 Q27 19 31 20 V31 Z" fill="#b9a83c"/><path d="M-1 31 V27.5 L4 26 Z" fill="#8a5a18"/></g><g opacity="0.5"><defs><radialGradient id="sun7" cx="4.6" cy="8" r="13" gradientUnits="userSpaceOnUse"><stop offset="0" stop-color="#fffef2"/><stop offset="0.2" stop-color="#fdeaa0"/><stop offset="0.45" stop-color="#eeb046"/><stop offset="0.75" stop-color="#d2b986"/><stop offset="1" stop-color="#c9b792"/></radialGradient></defs><rect x="-2" y="-2" width="34" height="34" fill="url(#sun7)"/><path d="M-1 -1 H31 V2 Q26 0.5 22 1.2 Q14 0 8 1.5 Q3 1 -1 3.5 Z" fill="#6a4a16"/><path d="M31 2 Q25 6 24 12 Q25 16 31 17 Z" fill="#8a7430"/><path d="M-1 12.5 Q3 12 6 13 Q12 11.5 19 13 Q23 12 25 14 Q28 13 31 15 V19 H-1 Z" fill="#454c1a"/><path d="M-1 12.5 Q3 12 6 13 L6 18 H-1 Z" fill="#a8640f"/><rect x="23" y="15" width="5" height="2.6" fill="#243c1c"/><rect x="-2" y="17" width="34" height="2" fill="#a79a30"/><rect x="-2" y="19" width="34" height="3.2" fill="#75601c"/><path d="M-1 22 Q8 21 18 22.5 L31 19 V31 H-1 Z" fill="#dcd5c6"/><path d="M-1 21 Q3 22 6 24 Q2 24 -1 23 Z" fill="#d89422"/><path d="M18 31 Q22 25 23 21 Q27 19 31 20 V31 Z" fill="#b9a83c"/><path d="M-1 31 V27.5 L4 26 Z" fill="#8a5a18"/></g></g></svg></div><div class="nm">明镜</div><div class="up"><div style="position:absolute;left:0;width:100%;top:31px;line-height:18px">官方</div></div><div class="tm">2020-08-20 00:57:36</div><a class="a1"><span>TA</span>的团队</a><a class="a2"><span>TA</span>的客户</a><a class="a3"><span>TA</span>的访客</a></div>
<div class="red" style="left:210px;top:257px;width:154px;height:68px"></div>
<div class="red" style="left:54px;top:266px;width:82px;height:33px"></div>
<div class="red" style="left:-1px;top:324px;width:100px;height:48px"></div>
</body>
</html>
